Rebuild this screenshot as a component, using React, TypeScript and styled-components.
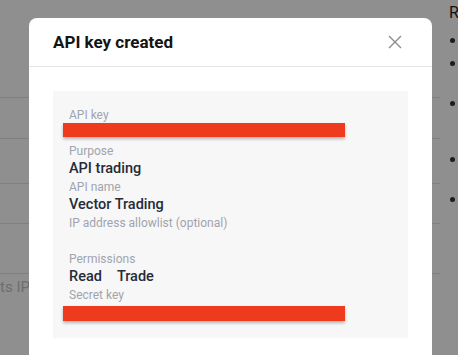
import styled, { createGlobalStyle } from 'styled-components';

const GlobalStyle = createGlobalStyle`
  html, body {
    margin: 0;
    padding: 0;
    background: #ffffff;
    font-family: Roboto, 'Liberation Sans', sans-serif;
    overflow: hidden;
  }
`;

const Page = styled.div`
  display: flex;
  width: 458px;
  height: 355px;
  overflow: hidden;
`;

const MainColumn = styled.div`
  width: 440px;
  flex-shrink: 0;
  padding-top: 59px;
`;

const TableRow = styled.div<{ h: number }>`
  height: ${(p) => p.h}px;
  border-bottom: 1px solid #e2e2e2;
`;

const FooterNote = styled.div`
  margin-top: 4px;
  margin-left: -48px;
  font-size: 15px;
  color: #c4c4c4;
  white-space: nowrap;
`;

const SideColumn = styled.div`
  padding-left: 9px;
  white-space: nowrap;
`;

const SideTitle = styled.div`
  margin-top: 3px;
  font-size: 16px;
  color: #1d1d1d;
`;

const BulletList = styled.ul`
  margin: 0;
  padding: 0 0 0 1px;
  list-style: none;
`;

const Bullet = styled.li<{ gap: number }>`
  margin-top: ${(p) => p.gap}px;
  width: 5px;
  height: 5px;
  border-radius: 50%;
  background: #333333;
`;

const Overlay = styled.div`
  position: fixed;
  inset: 0;
  background: rgba(0, 0, 0, 0.44);
  padding: 18px 0 0 29px;
`;

const Modal = styled.div`
  width: 403px;
  height: 420px;
  background: #ffffff;
  border-radius: 8px;
`;

const ModalHeader = styled.div`
  height: 48px;
  padding: 0 24px;
  display: flex;
  align-items: center;
  justify-content: space-between;
  border-bottom: 1px solid #e4e4e4;
`;

const Title = styled.h2`
  margin: 0;
  font-size: 17px;
  font-weight: 700;
  color: #141414;
`;

const CloseButton = styled.button`
  border: none;
  background: none;
  padding: 0;
  margin-right: 5px;
  width: 16px;
  height: 16px;
  display: flex;
  align-items: center;
  justify-content: center;
  cursor: pointer;
`;

const ModalBody = styled.div`
  padding: 24px;
`;

const InfoBox = styled.div`
  background: #f7f7f7;
  padding: 15px 16px 16px;
`;

const Label = styled.div`
  font-size: 12px;
  line-height: 18px;
  color: #a1a4ae;
`;

const Value = styled.div`
  font-size: 14.5px;
  font-weight: 500;
  line-height: 18px;
  height: 18px;
  color: #262b38;
  display: flex;
  gap: 15px;
`;

const Redaction = styled.div<{ top: number; h: number }>`
  margin: ${(p) => p.top}px 0 0 -6px;
  width: 282px;
  height: ${(p) => p.h}px;
  background: #ee3a1d;
  box-shadow: 0 2px 3px rgba(0, 0, 0, 0.28);
`;

const CloseIcon = () => (
  <svg width="14" height="14" viewBox="0 0 14 14">
    <path d="M1 1L13 13M13 1L1 13" stroke="#8c8c8c" strokeWidth="1.4" fill="none" />
  </svg>
);

const rows = [38, 40, 44, 39, 49];
const bullets = [16, 18, 35, 51, 35];

const App = () => {
  return (
    <>
      <GlobalStyle />
      <Page>
        <MainColumn>
          {rows.map((h, i) => (
            <TableRow key={i} h={h} />
          ))}
          <FooterNote>Supports IP allowlist</FooterNote>
        </MainColumn>
        <SideColumn>
          <SideTitle>Reminders</SideTitle>
          <BulletList>
            {bullets.map((g, i) => (
              <Bullet key={i} gap={g} />
            ))}
          </BulletList>
        </SideColumn>
      </Page>
      <Overlay>
        <Modal>
          <ModalHeader>
            <Title>API key created</Title>
            <CloseButton aria-label="Close">
              <CloseIcon />
            </CloseButton>
          </ModalHeader>
          <ModalBody>
            <InfoBox>
              <Label>API key</Label>
              <Value>
                <Redaction top={-1} h={14} />
              </Value>
              <Label>Purpose</Label>
              <Value>API trading</Value>
              <Label>API name</Label>
              <Value>Vector Trading</Value>
              <Label>IP address allowlist (optional)</Label>
              <Value />
              <Label>Permissions</Label>
              <Value>
                <span>Read</span>
                <span>Trade</span>
              </Value>
              <Label>Secret key</Label>
              <Value>
                <Redaction top={2} h={15} />
              </Value>
            </InfoBox>
          </ModalBody>
        </Modal>
      </Overlay>
    </>
  );
};

export default App;
